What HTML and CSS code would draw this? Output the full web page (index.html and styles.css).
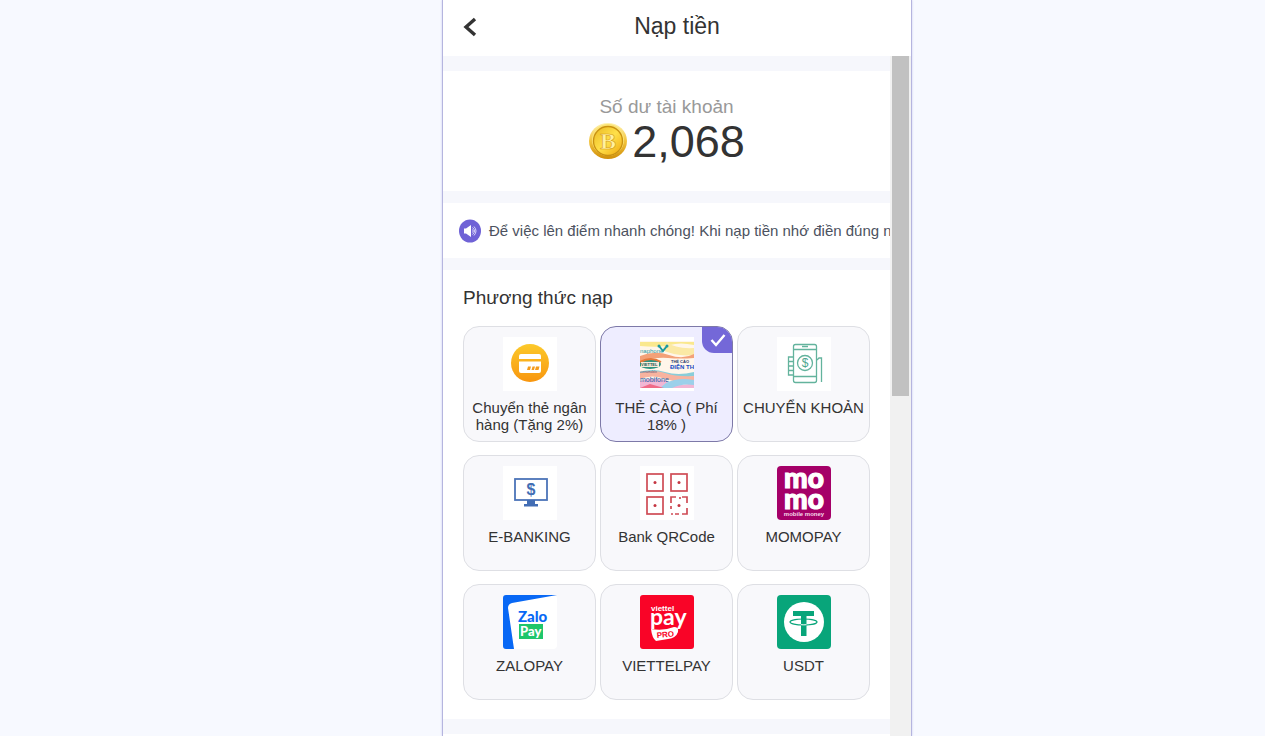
FILE: index.html
```html
<!DOCTYPE html>
<html lang="vi">
<head>
  <meta charset="UTF-8" />
  <meta name="viewport" content="width=device-width, initial-scale=1" />
  <title>Nạp tiền</title>
  <link rel="stylesheet" href="styles.css">
</head>
<body>
  <div class="app">
    <!-- Top bar -->
    <header class="navbar">
      <button class="back-btn" type="button" aria-label="Quay lại">
        <svg width="14" height="20" viewBox="0 0 14 20" fill="none" stroke="#333" stroke-width="3.400"><path d="M12 2 L3 10 L12 18"/></svg>
      </button>
      <h1>Nạp tiền</h1>
    </header>

    <div class="view">
      <main class="content">
        <!-- Balance -->
        <section class="balance">
          <div class="balance-label">Số dư tài khoản</div>
          <div class="balance-amount">
            <svg width="40" height="40" viewBox="0 0 40 40">
              <defs>
                <linearGradient id="coinEdge" x1="0" y1="0" x2="0" y2="1"><stop offset="0" stop-color="#fff3b0"/><stop offset=".5" stop-color="#f3c43c"/><stop offset="1" stop-color="#d08f0a"/></linearGradient>
                <linearGradient id="coinFace" x1="0" y1="0" x2="1" y2="1"><stop offset="0" stop-color="#e9b821"/><stop offset=".5" stop-color="#ffe04a"/><stop offset="1" stop-color="#f0a80c"/></linearGradient>
              </defs>
              <ellipse cx="20" cy="19" rx="19" ry="18" fill="url(#coinEdge)"/>
              <circle cx="20" cy="18" r="16" fill="#fbe374"/>
              <circle cx="20" cy="19" r="14.500" fill="url(#coinFace)" stroke="#c99212" stroke-width="1.300"/>
              <text x="20" y="27" class="coin-letter" font-size="24" fill="#fff1a0" stroke="#d59b17" stroke-width=".600" text-anchor="middle">B</text>
            </svg>
            <span>2,068</span>
          </div>
        </section>

        <!-- Notice -->
        <section class="notice">
          <svg width="22" height="24" viewBox="0 0 22 24">
            <ellipse cx="11" cy="12" rx="11" ry="11.500" fill="#6f62d6"/>
            <path d="M5 9.500H7L12 6V18L7 14.500H5Z" fill="#fff"/>
            <path d="M13.500 8.500Q17.500 12 13.500 15.500M13.500 10.500Q15 12 13.500 13.500M15 7.500Q19 12 15 16.500" fill="none" stroke="#dcd8fa" stroke-width="1"/>
          </svg>
          <p>Để việc lên điểm nhanh chóng! Khi nạp tiền nhớ điền đúng nội dung</p>
        </section>

        <!-- Payment methods -->
        <section class="methods">
          <h2>Phương thức nạp</h2>
          <div class="method-grid">
            <label class="method">
              <input type="radio" name="method">
              <svg class="method-icon" viewBox="0 0 54 54">
                <defs><linearGradient id="cardFill" x1="0" y1="0" x2="0" y2="1"><stop offset="0" stop-color="#fcc92a"/><stop offset="1" stop-color="#f8960f"/></linearGradient></defs>
                <rect width="54" height="54" fill="#fff"/>
                <circle cx="27" cy="26" r="19" fill="url(#cardFill)"/>
                <path d="M18 17H36Q38 17 38 19V22H16V19Q16 17 18 17ZM16 24.500H38V34Q38 36 36 36H18Q16 36 16 34Z" fill="#fff"/>
                <path d="M24 33L25 29.500H28L27 33ZM28.500 33L29.500 29.500H32L31 33ZM32 33L33 29.500H36.500L35.500 33Z" fill="#f49c1c"/>
              </svg>
              <span>Chuyển thẻ ngân hàng (Tặng 2%)</span>
            </label>

            <label class="method">
              <input type="radio" name="method" checked>
              <svg class="method-icon" viewBox="0 0 54 54">
                <rect width="54" height="54" fill="#fff"/>
                <rect y="4" width="54" height="47" fill="#fff6ea"/>
                <path d="M0 5H54V8Q40 5 30 8T0 9Z" fill="#fae88e"/>
                <path d="M27 5Q35 12 54 11V18Q37 20 22 13Z" fill="#fbe9a5"/>
                <path d="M0 19Q15 13 29 18T54 17V21Q40 22 28 21T0 24Z" fill="#f3a178"/>
                <path d="M0 35Q12 31 25 35T54 35V39Q40 42 28 39T0 39Z" fill="#8acdd9"/>
                <path d="M0 36Q13 32 25 36T54 39V44Q40 47 26 42T0 42Z" fill="#f8b39f"/>
                <path d="M0 44Q16 39 29 45T54 45V51H0Z" fill="#f1b6d4"/>
                <path d="M26 46Q38 40 54 43V48Q42 46 32 51H20Z" fill="#9bd0ea"/>
                <path d="M0 51L10 47L24 51Z" fill="#f06a88"/>
                <ellipse cx="10" cy="27" rx="11" ry="5" fill="#2d9381"/>
                <path d="M0 25Q11 19 21 25" fill="none" stroke="#e5793b" stroke-width="2"/>
                <rect x="1" y="25" width="18" height="5" fill="#f8ead8"/>
                <path d="M19 9L23 14L27 9" fill="none" stroke="#1c99a0" stroke-width="2"/>
                <circle cx="19" cy="9" r="1.500" fill="#1c99a0"/><circle cx="27" cy="9" r="1.500" fill="#1c99a0"/>
                <text x="0" y="16" class="art-text" font-size="6" fill="#2398a6">naphone</text>
                <text x="1" y="29" class="art-text art-bold" font-size="4" fill="#245b55">VIETTEL</text>
                <text x="0" y="36" class="art-text" font-size="3" fill="#555577">vietnamobile</text>
                <text x="0" y="45" class="art-text" font-size="7" fill="#1e5ba6">mobifone</text>
                <text x="31" y="26" class="art-text art-bold" font-size="4" fill="#26356d">THẺ CÀO</text>
                <text x="30" y="32" class="art-text art-bold" font-size="6" fill="#1549c4">ĐIỆN TH</text>
              </svg>
              <span>THẺ CÀO ( Phí 18% )</span>
              <i class="check">
                <svg width="16" height="14" viewBox="0 0 16 14" fill="none" stroke="#fff" stroke-width="2.400"><path d="M1.500 7L6 12L14.500 2"/></svg>
              </i>
            </label>

            <label class="method">
              <input type="radio" name="method">
              <svg class="method-icon" viewBox="0 0 54 54">
                <rect width="54" height="54" fill="#fff"/>
                <g fill="none" stroke="#63b39d" stroke-width="1.300">
                  <rect x="16.500" y="7.500" width="23" height="38" rx="2"/>
                  <path d="M16.500 12.500H39.500M16.500 39.500H39.500M25 9.500H31M16 20H11.500V38H16M11.500 24.500H16M11.500 29H16M11.500 33.500H16M40 23L42 21H44.500V45"/>
                  <circle cx="28" cy="26" r="7.500"/>
                </g>
                <text x="28" y="30" class="art-text" font-size="12" fill="#4ea58d" text-anchor="middle">$</text>
              </svg>
              <span>CHUYỂN KHOẢN</span>
            </label>

            <label class="method">
              <input type="radio" name="method">
              <svg class="method-icon" viewBox="0 0 54 54">
                <rect width="54" height="54" fill="#fff"/>
                <rect x="12" y="13" width="32" height="21" fill="none" stroke="#4c74b8" stroke-width="1.800"/>
                <path d="M24 34H32V38H35V40.500H21V38H24Z" fill="#426db4"/>
                <text x="28" y="29" class="art-text art-bold" font-size="16" fill="#426db4" text-anchor="middle">$</text>
              </svg>
              <span>E-BANKING</span>
            </label>

            <label class="method">
              <input type="radio" name="method">
              <svg class="method-icon" viewBox="0 0 54 54">
                <rect width="54" height="54" fill="#fff"/>
                <g fill="none" stroke="#cf4c55" stroke-width="1.700">
                  <rect x="7" y="8" width="16" height="17"/>
                  <rect x="31" y="8" width="16" height="17"/>
                  <rect x="7" y="31" width="16" height="17"/>
                  <path d="M31 37V31H36M40 31V33M42 31H47V37M47 42V48H42M39 48H35M31 48H33M31 40V43"/>
                </g>
                <g fill="#c53642"><circle cx="15" cy="16.500" r="1.500"/><circle cx="39" cy="16.500" r="1.500"/><circle cx="15" cy="39.500" r="1.500"/><circle cx="39" cy="39.500" r="1.500"/></g>
              </svg>
              <span>Bank QRCode</span>
            </label>

            <label class="method">
              <input type="radio" name="method">
              <svg class="method-icon" viewBox="0 0 54 54">
                <rect width="54" height="54" rx="4" fill="#a50068"/>
                <g class="art-round" font-size="28" fill="#fff" stroke="#fff" stroke-width="1.200" text-anchor="middle">
                  <text x="27" y="22">mo</text>
                  <text x="27" y="43">mo</text>
                </g>
                <text x="27" y="50" class="art-text art-bold" font-size="6" fill="#f6d8ea" text-anchor="middle">mobile money</text>
              </svg>
              <span>MOMOPAY</span>
            </label>

            <label class="method">
              <input type="radio" name="method">
              <svg class="method-icon" viewBox="0 0 54 54">
                <rect width="54" height="54" rx="4" fill="#fff"/>
                <path d="M3 0H54L9 8Q5 9 5 13L11 54H3Q0 54 0 51V3Q0 0 3 0Z" fill="#0868f5"/>
                <text x="15" y="27" class="art-round" font-size="15" fill="#0868f5">Zalo</text>
                <rect x="16" y="29" width="24" height="15" fill="#1ec66b"/>
                <text x="17" y="41" class="art-round" font-size="13" fill="#fff">Pay</text>
              </svg>
              <span>ZALOPAY</span>
            </label>

            <label class="method">
              <input type="radio" name="method">
              <svg class="method-icon" viewBox="0 0 54 54">
                <rect width="54" height="54" rx="3" fill="#f90427"/>
                <text x="11" y="16" class="art-text art-bold" font-size="8" fill="#fff">viettel</text>
                <text x="10" y="30" class="pay-word" font-size="23" fill="#fff">pay</text>
                <path d="M11 34Q24 36 34 32Q39 32 38 37Q36 43 28 44L16 46Q12 43 11 34Z" fill="#fff"/>
                <text x="17" y="43" class="art-text art-bold" font-size="8" fill="#f90427" transform="rotate(-5 17 43)">PRO</text>
              </svg>
              <span>VIETTELPAY</span>
            </label>

            <label class="method">
              <input type="radio" name="method">
              <svg class="method-icon" viewBox="0 0 54 54">
                <rect width="54" height="54" rx="4" fill="#08a57a"/>
                <circle cx="27" cy="27" r="20" fill="#fff"/>
                <path d="M16 16H37V21H29.500V41H24V21H16Z" fill="#08a57a"/>
                <ellipse cx="26.500" cy="27" rx="13.500" ry="3" fill="none" stroke="#08a57a" stroke-width="1.200"/>
                <path d="M24 29.700Q27 30 29.500 29.700" fill="none" stroke="#fff" stroke-width="1"/>
              </svg>
              <span>USDT</span>
            </label>
          </div>
        </section>

        <section class="amount"></section>
      </main>
      <div class="scrollbar"><div class="scroll-thumb"></div></div>
    </div>
  </div>
</body>
</html>
```
FILE: styles.css
```css
* {
  box-sizing: border-box;
}
body {
  margin: 0;
  padding-left: 89px;
  background: #f7f9ff;
  font-family: "Liberation Sans", Arial, sans-serif;
  color: #333;
}
/* Phone-width column */
.app {
  display: flex;
  flex-direction: column;
  max-width: 470px;
  height: 100vh;
  margin: 0 auto;
  border: solid #b5b5df;
  border-width: 0 1px;
  box-shadow: 0 0 2px #c9c9ee;
  background: #fff;
}
/* Top bar */
.navbar {
  display: grid;
  grid-template-columns: 54px 1fr 54px;
  align-items: center;
  flex: none;
  height: 56px;
  padding-bottom: 4px;
}
.navbar h1 {
  margin: 0;
  font-size: 23px;
  font-weight: normal;
  text-align: center;
}
.back-btn {
  display: flex;
  padding: 2px 20px 0;
  border: none;
  background: none;
  cursor: pointer;
}
/* Scrolling area with its bar beside it */
.view {
  display: flex;
  flex: 1;
  min-height: 0;
}
.content {
  flex: 1;
  min-width: 0;
  overflow-x: hidden;
  overflow-y: auto;
  scrollbar-width: none;
  padding-top: 15px;
  background: #f6f7fc;
}
.content section {
  background: #fff;
}
.scrollbar {
  width: 21px;
  padding: 0 2px;
  background: #f1f1f1;
}
.scroll-thumb {
  height: 50%;
  background: #c1c1c1;
}
/* Balance */
.balance {
  height: 120px;
  padding-top: 24px;
  text-align: center;
}
.balance-label {
  font-size: 19px;
  line-height: 24px;
  color: #999;
}
.balance-amount {
  display: flex;
  justify-content: center;
  align-items: center;
  gap: 4px;
  font-size: 45px;
  line-height: 45px;
}
/* Notice line, cut at the edge */
.notice {
  display: flex;
  align-items: center;
  gap: 8px;
  height: 55px;
  margin: 12px 0;
  padding-left: 16px;
  overflow: hidden;
}
.notice svg {
  flex: none;
}
.notice p {
  margin: 0;
  font-size: 15px;
  white-space: nowrap;
  color: #4c5260;
}
/* Payment methods */
.methods {
  padding: 16px 20px 19px;
}
.methods h2 {
  margin: 0 0 16px;
  font-size: 19px;
  line-height: 24px;
  font-weight: normal;
}
.method-grid {
  display: grid;
  grid-template-columns: repeat(3, 1fr);
  gap: 13px 4px;
}
.method {
  position: relative;
  display: flex;
  flex-direction: column;
  align-items: center;
  height: 116px;
  padding: 10px 4px 0;
  border: 1px solid #dedfe4;
  border-radius: 16px;
  background: #f8f8fb;
  font-size: 15px;
  line-height: 17px;
  text-align: center;
  overflow: hidden;
  cursor: pointer;
}
.method input {
  position: absolute;
  margin: 0;
  opacity: 0;
}
.method:has(input:checked) {
  border-color: #7d79a8;
  background: #eeedff;
}
.method-icon {
  flex: none;
  width: 54px;
  height: 54px;
  margin-bottom: 8px;
}
/* Corner tick of the chosen method */
.check {
  position: absolute;
  top: -1px;
  right: -1px;
  display: flex;
  justify-content: center;
  align-items: center;
  width: 31px;
  height: 27px;
  border-radius: 0 16px 0 12px;
  background: #7468d8;
}
/* Lettering inside the logos */
.art-text {
  font-family: "Liberation Sans", Arial, sans-serif;
}
.art-bold {
  font-weight: bold;
}
.art-round {
  font-family: Lato, sans-serif;
  font-weight: 900;
}
.pay-word {
  font-family: Lato, sans-serif;
  font-weight: bold;
}
.coin-letter {
  font-family: "Liberation Serif", serif;
  font-weight: bold;
}
.amount {
  min-height: 600px;
  margin-top: 15px;
}
```
